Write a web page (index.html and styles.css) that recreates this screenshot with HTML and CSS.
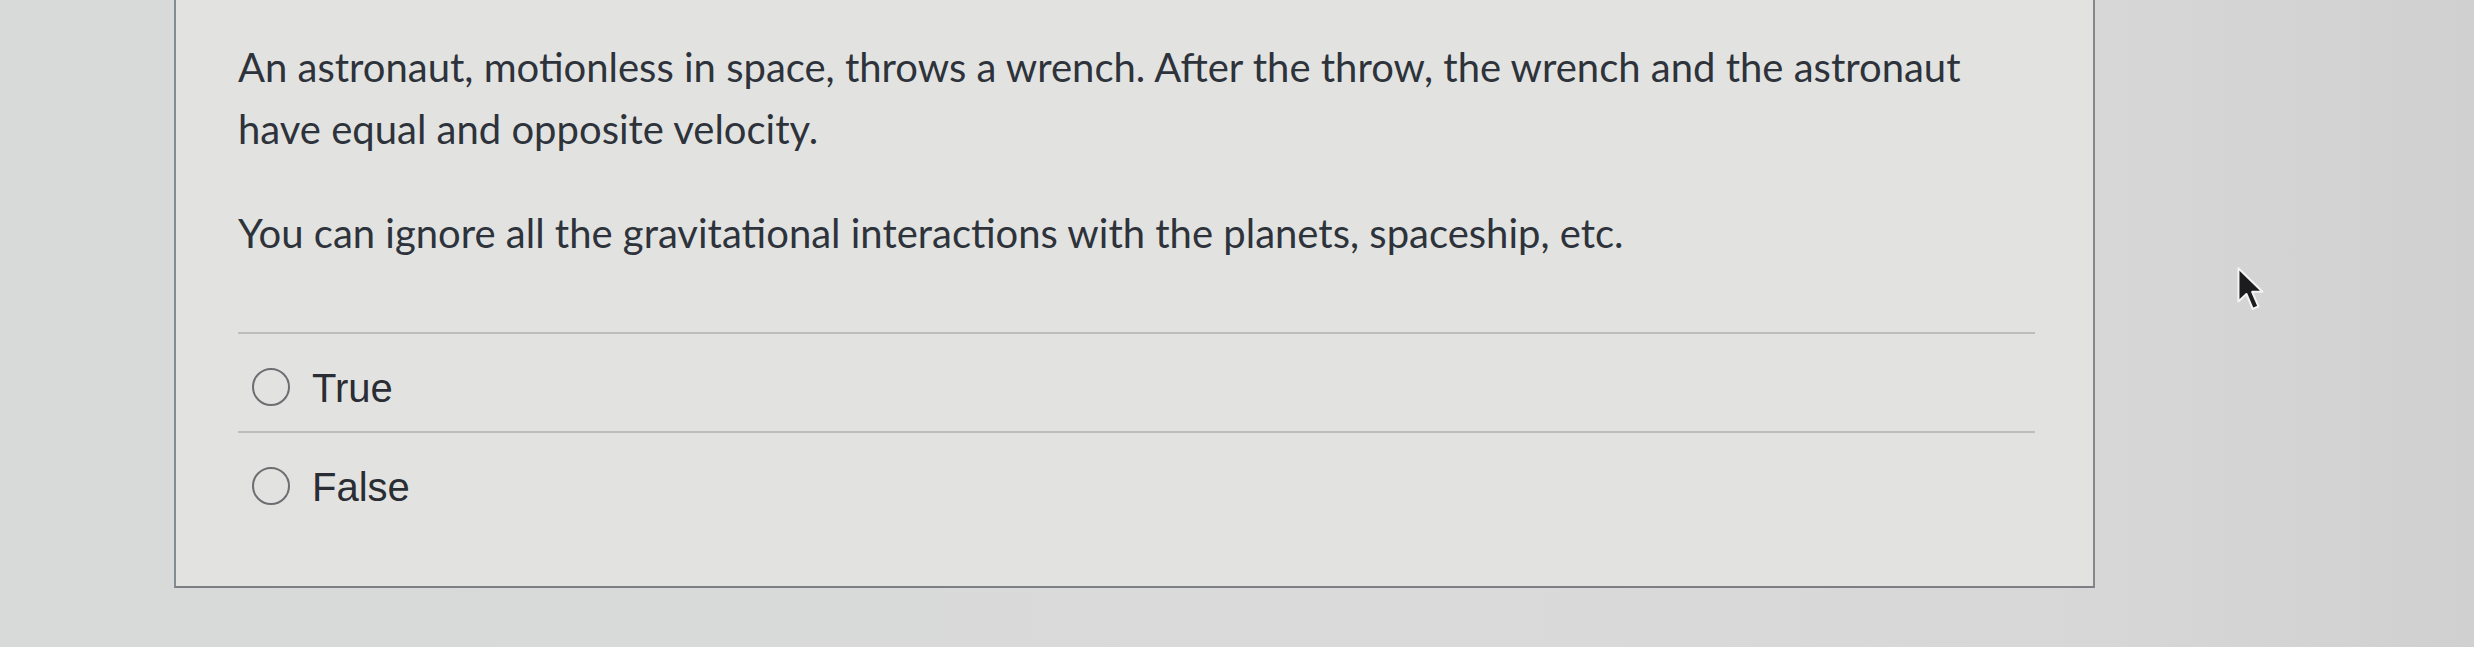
FILE: index.html
```html
<!DOCTYPE html>
<html lang="en">
<head>
<meta charset="utf-8">
<title>Question</title>
<link rel="stylesheet" href="styles.css">
</head>
<body>
<div class="page">
  <div class="card">
    <div class="question">
      <p class="para">An astronaut, motionless in space, throws a wrench. After the throw, the wrench and the astronaut have equal and opposite velocity.</p>
      <p class="para">You can ignore all the gravitational interactions with the planets, spaceship, etc.</p>
    </div>
    <div class="answers">
      <label class="answer"><span class="radio"></span><span class="answer-text">True</span></label>
      <label class="answer"><span class="radio"></span><span class="answer-text">False</span></label>
    </div>
  </div>
  <svg class="cursor" width="30" height="48" viewBox="0 0 26 42" aria-hidden="true">
    <path d="M2 2 L2 31 L9 24.5 L14.5 37.5 L19.5 35.3 L14 22.6 L23 22.6 Z" fill="#1c1c1e" stroke="#f4f4f4" stroke-width="1.8" stroke-linejoin="round"/>
  </svg>
</div>
</body>
</html>
```

FILE: styles.css
```css
html, body {
  margin: 0;
  padding: 0;
}

body {
  width: 2474px;
  height: 647px;
  overflow: hidden;
  background: linear-gradient(90deg, #d8dad9 0%, #d9dad9 60%, #d6d7d6 85%, #cfd0cf 100%);
  font-family: "Lato", "Liberation Sans", sans-serif;
}

.page {
  position: relative;
  height: 647px;
  padding-left: 174px;
  box-sizing: border-box;
}

.card {
  width: 1921px;
  box-sizing: border-box;
  background: #e2e3e1;
  border-left: 2px solid #858b94;
  border-right: 2px solid #86878a;
  border-bottom: 2px solid #7e7f84;
  padding: 36px 58px 56px 62px;
}

.question {
  color: #2e333b;
  font-size: 40px;
  line-height: 62px;
  width: 1760px;
}

.para {
  margin: 0 0 42px 0;
}

.para:last-child {
  margin-bottom: 68px;
}

.answers {
  display: flex;
  flex-direction: column;
}

.answer {
  display: flex;
  align-items: center;
  border-top: 2px solid #bcbdbc;
  padding: 34px 0 25px 14px;
  gap: 22px;
}

.radio {
  width: 38px;
  height: 38px;
  box-sizing: border-box;
  border: 2.5px solid #6c6e72;
  border-radius: 50%;
  flex: none;
}

.answer-text {
  font-family: "Liberation Sans", Arial, sans-serif;
  font-size: 40px;
  line-height: 38px;
  color: #2a2d33;
  position: relative;
  top: 1px;
}

.cursor {
  position: absolute;
  left: 2236px;
  top: 266px;
}
```
